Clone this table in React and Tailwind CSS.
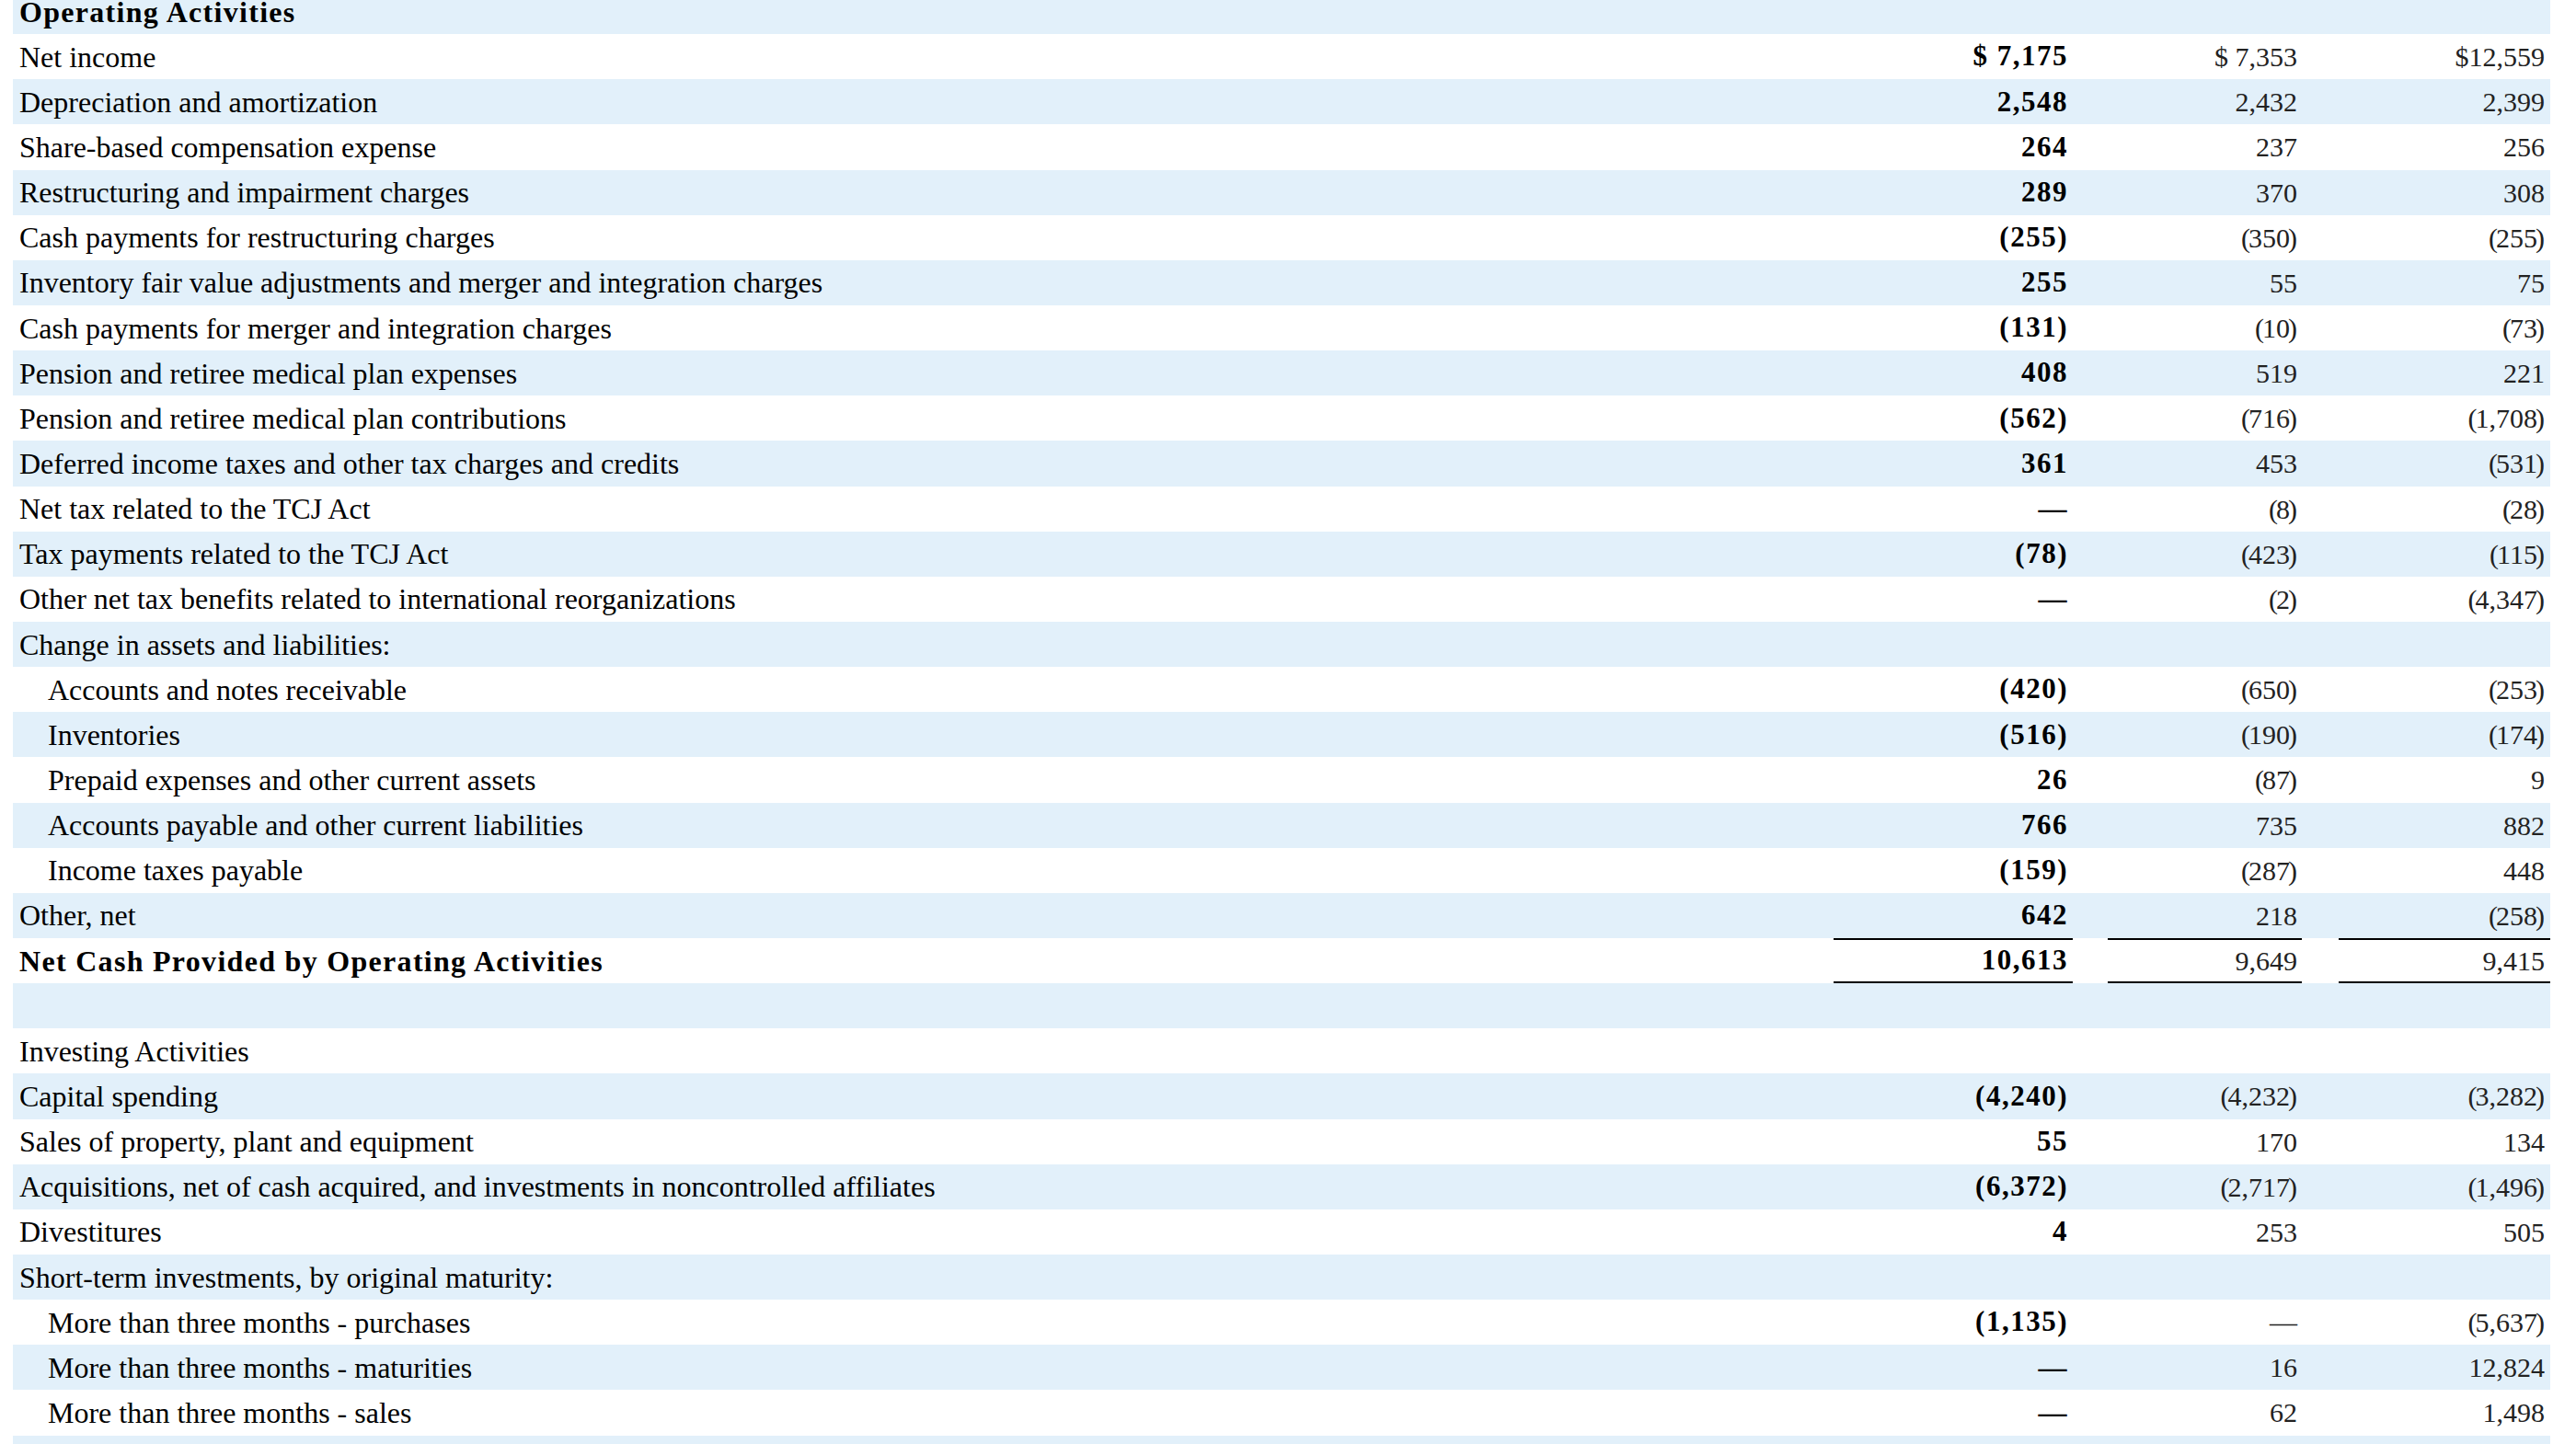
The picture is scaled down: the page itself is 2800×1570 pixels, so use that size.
import React from "react"

const rows = [
  { label: "Operating Activities", bold: true },
  { label: "Net income", v: ["$ 7,175", "$ 7,353", "$12,559"] },
  { label: "Depreciation and amortization", v: ["2,548", "2,432", "2,399"] },
  { label: "Share-based compensation expense", v: ["264", "237", "256"] },
  { label: "Restructuring and impairment charges", v: ["289", "370", "308"] },
  { label: "Cash payments for restructuring charges", v: ["(255)", "(350)", "(255)"] },
  { label: "Inventory fair value adjustments and merger and integration charges", v: ["255", "55", "75"] },
  { label: "Cash payments for merger and integration charges", v: ["(131)", "(10)", "(73)"] },
  { label: "Pension and retiree medical plan expenses", v: ["408", "519", "221"] },
  { label: "Pension and retiree medical plan contributions", v: ["(562)", "(716)", "(1,708)"] },
  { label: "Deferred income taxes and other tax charges and credits", v: ["361", "453", "(531)"] },
  { label: "Net tax related to the TCJ Act", v: ["—", "(8)", "(28)"] },
  { label: "Tax payments related to the TCJ Act", v: ["(78)", "(423)", "(115)"] },
  { label: "Other net tax benefits related to international reorganizations", v: ["—", "(2)", "(4,347)"] },
  { label: "Change in assets and liabilities:" },
  { label: "Accounts and notes receivable", indent: true, v: ["(420)", "(650)", "(253)"] },
  { label: "Inventories", indent: true, v: ["(516)", "(190)", "(174)"] },
  { label: "Prepaid expenses and other current assets", indent: true, v: ["26", "(87)", "9"] },
  { label: "Accounts payable and other current liabilities", indent: true, v: ["766", "735", "882"] },
  { label: "Income taxes payable", indent: true, v: ["(159)", "(287)", "448"] },
  { label: "Other, net", v: ["642", "218", "(258)"] },
  { label: "Net Cash Provided by Operating Activities", bold: true, total: true, v: ["10,613", "9,649", "9,415"] },
  { label: "" },
  { label: "Investing Activities" },
  { label: "Capital spending", v: ["(4,240)", "(4,232)", "(3,282)"] },
  { label: "Sales of property, plant and equipment", v: ["55", "170", "134"] },
  { label: "Acquisitions, net of cash acquired, and investments in noncontrolled affiliates", v: ["(6,372)", "(2,717)", "(1,496)"] },
  { label: "Divestitures", v: ["4", "253", "505"] },
  { label: "Short-term investments, by original maturity:" },
  { label: "More than three months - purchases", indent: true, v: ["(1,135)", "—", "(5,637)"] },
  { label: "More than three months - maturities", indent: true, v: ["—", "16", "12,824"] },
  { label: "More than three months - sales", indent: true, v: ["—", "62", "1,498"] },
  { label: "" },
]

// parentheses in the source are a little narrower than Liberation's
const Num = ({ text }) => {
  if (!text.startsWith("(")) return text
  return (
    <>
      <span className="-mr-[2px]">(</span>
      {text.slice(1, -1)}
      <span className="-ml-[2px]">)</span>
    </>
  )
}

const Row = ({ row, idx }) => {
  const shade = idx % 2 === 0 ? "bg-[#e2f0fa]" : "bg-white"
  const line = row.total ? "border-y-2 border-black" : ""
  const v = row.v || ["", "", ""]
  return (
    <div className={`flex h-[49.15px] items-center ${shade}`}>
      <div
        className={`flex-1 text-black ${row.indent ? "pl-[38px]" : "pl-[7px]"} ${
          row.bold ? "text-[32px] font-bold tracking-[1.3px]" : "text-[32px]"
        }`}
      >
        {row.label}
      </div>
      <div className={`w-[260px] h-full flex items-center justify-end pr-[5px] ${line}`}>
        <span className="text-[31px] font-bold tracking-[1.5px] text-black">{v[0]}</span>
      </div>
      <div className={`ml-[38px] w-[211px] h-full flex items-center justify-end pr-[5px] ${line}`}>
        <span className="text-[30px] text-[#222]">
          <Num text={v[1]} />
        </span>
      </div>
      <div className={`ml-[40px] w-[230px] h-full flex items-center justify-end pr-[6px] ${line}`}>
        <span className="text-[30px] text-[#222]">
          <Num text={v[2]} />
        </span>
      </div>
    </div>
  )
}

const App = () => {
  return (
    <div className="w-[2800px] h-[1570px] overflow-hidden bg-white font-['Liberation_Serif',serif]">
      <div className="-mt-[12px] pl-[14px] pr-[28px]">
        {rows.map((row, i) => (
          <Row key={i} row={row} idx={i} />
        ))}
      </div>
    </div>
  )
}

export default App
